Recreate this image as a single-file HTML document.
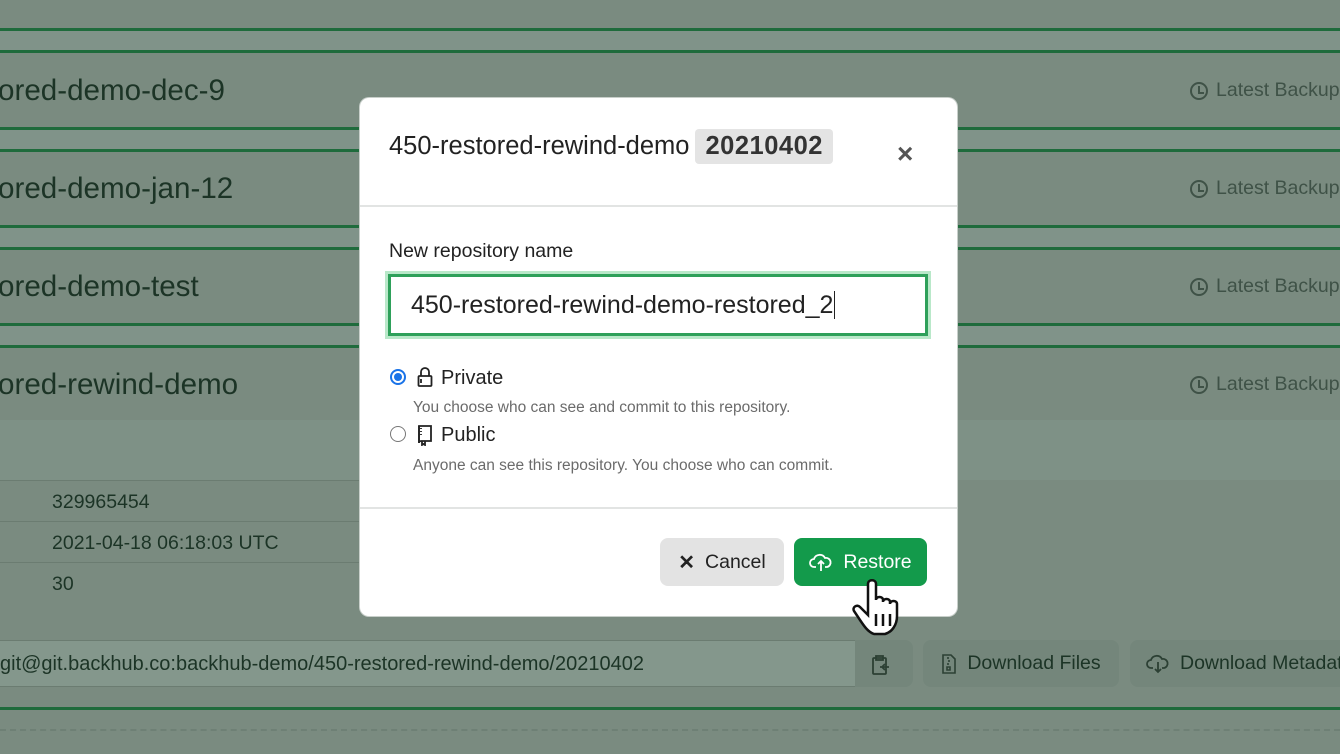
<!DOCTYPE html>
<html><head><style>
*{box-sizing:border-box;margin:0;padding:0}
body{width:1340px;height:754px;overflow:hidden;background:#7a8b80;font-family:"Liberation Sans",sans-serif;position:relative;color:#1e3327}
.abs{position:absolute}
.gl{position:absolute;left:0;right:0;height:3px;background:#1f6b3c}
.band{position:absolute;left:0;right:0;background:#809389}
.name{position:absolute;left:-2px;font-size:29.6px;color:#1c3426}
.lb{position:absolute;left:1190px;font-size:19.5px;color:#3f5247;display:flex;align-items:center;gap:8px;white-space:nowrap}
.clk{width:18px;height:18px;border:2px solid #3f5247;border-radius:50%;position:relative}
.clk:after{content:"";position:absolute;left:6px;top:2px;width:4px;height:6px;border-left:2px solid #3f5247;border-bottom:2px solid #3f5247}
.row{position:absolute;left:0;width:360px;height:1px;background:#6b7c71}
.val{position:absolute;left:52px;font-size:19.5px;color:#1c3426}
.modal{position:absolute;left:360px;top:98px;width:597px;height:518px;background:#fff;border-radius:9px;box-shadow:0 0 0 1px #c8cfca}
.btn{position:absolute;border-radius:8px;display:flex;align-items:center;justify-content:center;gap:10px;font-size:19.5px}
</style></head><body>
<div class="band" style="top:29px;height:22px"></div>
<div class="band" style="top:128px;height:22px"></div>
<div class="band" style="top:226px;height:22px"></div>
<div class="band" style="top:324px;height:22px"></div>
<div class="band" style="top:420px;height:60px;background:#7e9186"></div>
<div class="gl" style="top:28px"></div><div class="gl" style="top:50px"></div>
<div class="gl" style="top:127px"></div><div class="gl" style="top:149px"></div>
<div class="gl" style="top:225px"></div><div class="gl" style="top:247px"></div>
<div class="gl" style="top:323px"></div><div class="gl" style="top:345px"></div>
<div class="name" style="top:74px">ored-demo-dec-9</div>
<div class="name" style="top:172px">ored-demo-jan-12</div>
<div class="name" style="top:270px">ored-demo-test</div>
<div class="name" style="top:368px">ored-rewind-demo</div>
<div class="lb" style="top:79px"><span class="clk"></span>Latest Backup</div>
<div class="lb" style="top:177px"><span class="clk"></span>Latest Backup</div>
<div class="lb" style="top:275px"><span class="clk"></span>Latest Backup</div>
<div class="lb" style="top:373px"><span class="clk"></span>Latest Backup</div>
<div class="row" style="top:480px"></div><div class="row" style="top:521px"></div><div class="row" style="top:562px"></div>
<div class="val" style="top:491px">329965454</div>
<div class="val" style="top:532px">2021-04-18 06:18:03 UTC</div>
<div class="val" style="top:573px">30</div>
<div class="abs" style="left:0;top:640px;width:855px;height:47px;background:#84978c;border-top:1px solid #6b7c71;border-bottom:1px solid #6b7c71"></div>
<div class="abs" style="left:0;top:653px;font-size:20px;color:#1c3426">git@git.backhub.co:backhub-demo/450-restored-rewind-demo/20210402</div>
<div class="abs" style="left:855px;top:640px;width:58px;height:47px;background:#74867b;border-radius:0 8px 8px 0"></div>
<svg class="abs" style="left:871px;top:654px" width="20" height="22" viewBox="0 0 20 22" fill="none" stroke="#2c4034" stroke-width="1.8"><rect x="2" y="4" width="13" height="16" rx="1"/><rect x="5" y="2" width="7" height="4"/><path d="M9 13h9M14 10l-3 3 3 3"/></svg>
<div class="btn" style="left:923px;top:640px;width:196px;height:47px;background:#74867b;color:#1c3426"><svg width="16" height="20" viewBox="0 0 16 20" fill="none" stroke="#2c4034" stroke-width="1.6"><path d="M2 1h8l4 4v14H2z"/><path d="M7 3v2M8 6v2M7 9v2M6 13h3v3H6z"/></svg>Download Files</div>
<div class="btn" style="left:1130px;top:640px;width:260px;height:47px;background:#74867b;color:#1c3426;justify-content:flex-start;padding-left:16px"><svg width="24" height="20" viewBox="0 0 24 20" fill="none" stroke="#2c4034" stroke-width="1.8"><path d="M7 14H5a4 4 0 010-8 6 6 0 0111-1 4.5 4.5 0 012 9h-2"/><path d="M12 8v10M9 15l3 3 3-3"/></svg>Download Metadata</div>
<div class="gl" style="top:707px"></div>
<div class="abs" style="left:0;right:0;top:729px;border-top:2px dashed #6e8075"></div>

<div class="modal">
<div class="abs" style="left:29px;top:31px;font-size:25.5px;color:#222;display:flex;align-items:center;gap:6px">450-restored-rewind-demo <span style="background:#e4e4e4;border-radius:4px;padding:3px 10px;font-weight:bold;color:#333;letter-spacing:0.5px">20210402</span></div>
<div class="abs" style="left:537px;top:40px;font-size:28px;font-weight:bold;color:#555">×</div>
<div class="abs" style="left:0;right:0;top:107px;height:2px;background:#e2e4e3"></div>
<div class="abs" style="left:29px;top:142px;font-size:19.5px;color:#222">New repository name</div>
<div class="abs" style="left:28px;top:176px;width:540px;height:62px;border:3px solid #2ea05a;box-shadow:0 0 0 3px #b9e8c9;padding-left:20px;font-size:25px;line-height:56px;color:#222">450-restored-rewind-demo-restored_2<span style="border-left:1.5px solid #222;margin-left:1px"></span></div>
<div class="abs" style="left:30px;top:271px;width:16px;height:16px;border-radius:50%;border:2px solid #1a73e8;background:#fff"><div style="margin:2px;width:8px;height:8px;border-radius:50%;background:#1a73e8"></div></div>
<svg class="abs" style="left:57px;top:268px" width="16" height="22" viewBox="0 0 16 22" fill="none" stroke="#222" stroke-width="1.8"><path d="M4 10V6a4 4 0 018 0v4"/><rect x="1.5" y="10" width="13" height="10" rx="1"/><path d="M4 13v4"/></svg>
<div class="abs" style="left:81px;top:269px;font-size:20px;color:#222">Private</div>
<div class="abs" style="left:53px;top:301px;font-size:15.5px;color:#6b6b6b">You choose who can see and commit to this repository.</div>
<div class="abs" style="left:30px;top:328px;width:16px;height:16px;border-radius:50%;border:1.5px solid #777;background:#fff"></div>
<svg class="abs" style="left:57px;top:326px" width="16" height="22" viewBox="0 0 16 22" fill="none" stroke="#222" stroke-width="1.8"><path d="M2 2h12v15H4a2 2 0 00-2 2z"/><path d="M2 19V2M4 4v1M4 7v1M4 10v1M5 17v4l1.5-1 1.5 1v-4"/></svg>
<div class="abs" style="left:81px;top:326px;font-size:20px;color:#222">Public</div>
<div class="abs" style="left:53px;top:359px;font-size:15.5px;color:#6b6b6b">Anyone can see this repository. You choose who can commit.</div>
<div class="abs" style="left:0;right:0;top:409px;height:2px;background:#e2e4e3"></div>
<div class="btn" style="left:300px;top:440px;width:124px;height:48px;background:#e3e3e3;color:#222"><span style="font-weight:bold;font-size:20px">✕</span>Cancel</div>
<div class="btn" style="left:434px;top:440px;width:133px;height:48px;background:#139a4b;color:#fff"><svg width="24" height="20" viewBox="0 0 24 20" fill="none" stroke="#fff" stroke-width="1.8"><path d="M7 15H5a4 4 0 010-8 6 6 0 0111-1 4.5 4.5 0 012 9h-2"/><path d="M12 19V9M9 12l3-3 3 3"/></svg>Restore</div>
</div>
<svg class="abs" style="left:852px;top:578px" width="60" height="62" viewBox="0 0 60 62"><path d="M16 6c0-5 8-5 8 0v16c0-4 7-4 7 0v2c0-4 7-4 7 0v2c0-4 7-4 7 0v12c0 9-5 16-12 18H22c-6-2-10-8-14-14l-6-9c-2-4 3-7 6-4l8 8z" fill="#fff" stroke="#111" stroke-width="2.5"/><path d="M24 36v12M31 36v12M38 36v12" stroke="#111" stroke-width="2.5"/></svg>
</body></html>
